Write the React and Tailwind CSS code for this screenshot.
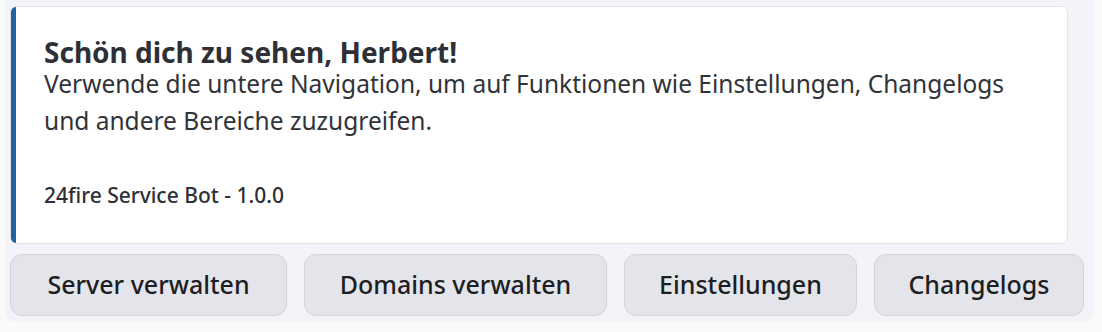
export default function App() {
  const buttons = [
    { label: 'Server verwalten', w: 'w-[277px]' },
    { label: 'Domains verwalten', w: 'w-[303px]' },
    { label: 'Einstellungen', w: 'w-[233px]' },
    { label: 'Changelogs', w: 'w-[210px]' },
  ];

  return (
    <div className="h-[332px] w-[1102px] bg-[#fafafa] font-['Noto_Sans',sans-serif] text-[#313338]">
      <div className="ml-[5px] w-[1089px] rounded-b-[10px] bg-[#f3f3fa] pl-[5px] pt-[6px] pb-[6px]">
        {/* Embed */}
        <div className="flex h-[238px] w-[1058px] overflow-hidden rounded-[6px] border border-[#e3e4e8] bg-white">
          <div className="w-[5px] shrink-0 bg-[#21639b]" />
          <div className="pl-[28px] pr-[24px] pt-[32px]">
            <h1 className="text-[28px] font-bold leading-[26px] text-[#2e3035]">
              Schön dich zu sehen, Herbert!
            </h1>
            <p className="text-[24.5px] leading-[37px] text-[#313338]">
              Verwende die untere Navigation, um auf Funktionen wie Einstellungen, Changelogs und andere Bereiche zuzugreifen.
            </p>
            <p className="mt-[42px] text-[21px] font-medium leading-[28px] text-[#2e3035]">
              24fire Service Bot - 1.0.0
            </p>
          </div>
        </div>

        {/* Buttons */}
        <div className="mt-[10px] flex gap-[17px]">
          {buttons.map((b) => (
            <button
              key={b.label}
              className={`${b.w} h-[62px] rounded-[12px] border border-[#d3d5da] bg-[#e3e5ea] text-[25px] font-medium text-[#1d1e22]`}
            >
              {b.label}
            </button>
          ))}
        </div>
      </div>
    </div>
  );
}
